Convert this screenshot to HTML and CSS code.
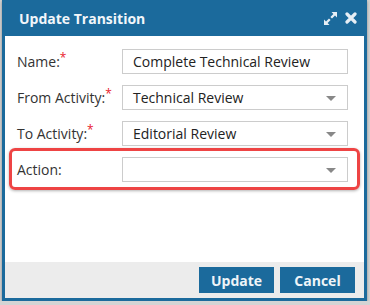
FILE: index.html
```html
<!DOCTYPE html>
<html>
<head>
<meta charset="utf-8">
<link rel="stylesheet" href="styles.css">
</head>
<body>
<div class="dialog">
  <div class="header">
    <span class="title">Update Transition</span>
    <span class="tools">
      <svg class="icon" width="15" height="15" viewBox="0 0 15 15">
        <path d="M8.5 1h5.5v5.5l-2-2-3 3-1.6-1.6 3-3z M6.5 14H1V8.5l2 2 3-3 1.6 1.6-3 3z" fill="#e6eef5"/>
      </svg>
      <svg class="icon" width="12" height="12" viewBox="0 0 12 12">
        <path d="M2 2l8 8M10 2l-8 8" stroke="#e6eef5" stroke-width="3.2" stroke-linecap="round"/>
      </svg>
    </span>
  </div>
  <div class="body">
    <div class="row">
      <label class="label">Name:<span class="req">*</span></label>
      <div class="field">Complete Technical Review</div>
    </div>
    <div class="row">
      <label class="label">From Activity:<span class="req">*</span></label>
      <div class="field select">Technical Review<span class="caret"></span></div>
    </div>
    <div class="row">
      <label class="label">To Activity:<span class="req">*</span></label>
      <div class="field select">Editorial Review<span class="caret"></span></div>
    </div>
    <div class="row highlight">
      <label class="label">Action:</label>
      <div class="field select"><span class="caret"></span></div>
    </div>
  </div>
  <div class="footer">
    <button class="btn">Update</button>
    <button class="btn">Cancel</button>
  </div>
</div>
</body>
</html>
```
FILE: styles.css
```css
html, body {
  margin: 0;
  padding: 0;
  background: #d4d4d4;
  font-family: "Open Sans", "Liberation Sans", sans-serif;
}
.dialog {
  width: 359px;
  height: 298px;
  margin-left: 2px;
  border: 3px solid #1b6a9c;
  border-top: 0;
  background: #fff;
  box-shadow: 0 1px 3px rgba(0,0,0,0.35);
  display: flex;
  flex-direction: column;
}
.header {
  height: 36px;
  background: #1b6a9c;
  display: flex;
  align-items: center;
  justify-content: space-between;
  padding: 0 10px 0 17px;
  margin: 0 -3px;
}
.title {
  color: #f2f6fa;
  font-weight: 700;
  font-size: 14px;
}
.tools {
  display: flex;
  align-items: center;
  gap: 7px;
}
.icon { display: block; }
.body {
  flex: 1;
  padding: 13px 16px 0 12px;
  display: flex;
  flex-direction: column;
  gap: 11px;
}
.row {
  display: flex;
  align-items: center;
  height: 25px;
}
.label {
  width: 105px;
  font-size: 14px;
  color: #333;
}
.req {
  color: #e8192c;
  font-size: 12px;
  vertical-align: top;
  position: relative;
  top: -3px;
}
.field {
  flex: 1;
  height: 23px;
  border: 1px solid #ccc;
  font-size: 14px;
  color: #222;
  display: flex;
  align-items: center;
  padding-left: 10px;
  position: relative;
}
.caret {
  position: absolute;
  right: 11px;
  top: 10px;
  width: 0;
  height: 0;
  border-left: 5px solid transparent;
  border-right: 5px solid transparent;
  border-top: 5px solid #888;
}
.highlight {
  position: relative;
}
.highlight::before {
  content: "";
  position: absolute;
  left: -8px;
  right: -12px;
  top: -9px;
  bottom: -8px;
  border: 3px solid #ee4444;
  border-radius: 6px;
  box-shadow: 0 1px 3px rgba(0,0,0,0.3);
  pointer-events: none;
}
.footer {
  height: 36px;
  background: #ececec;
  display: flex;
  align-items: center;
  justify-content: flex-end;
  gap: 6px;
  padding-right: 9px;
}
.btn {
  width: 75px;
  height: 26px;
  border: 0;
  background: #1b6a9c;
  color: #eef4f8;
  font-family: "Open Sans", "Liberation Sans", sans-serif;
  font-weight: 700;
  font-size: 14px;
  padding: 0;
}
```
